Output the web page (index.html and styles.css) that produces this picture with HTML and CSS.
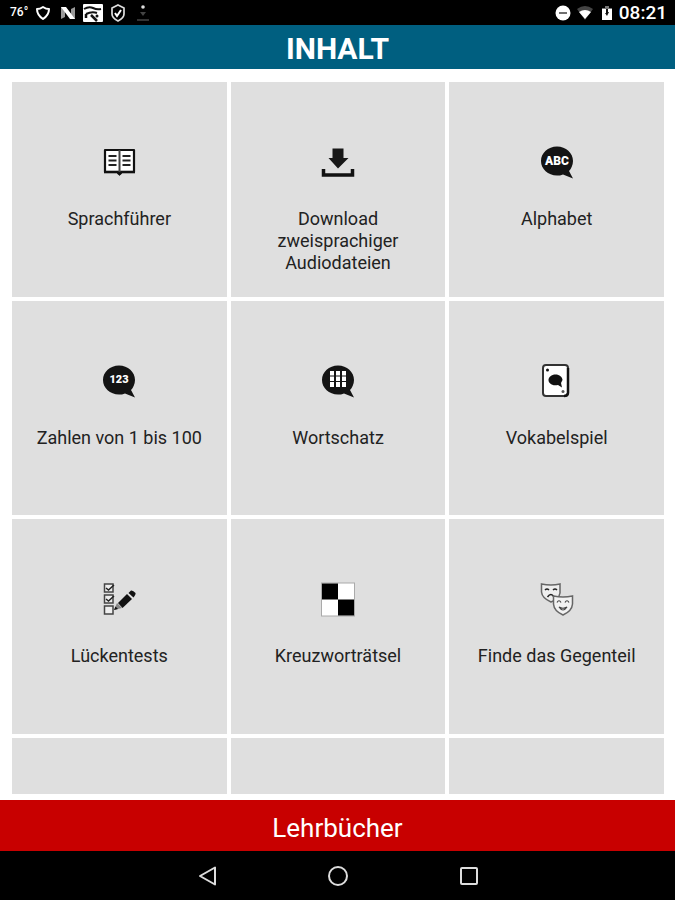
FILE: index.html
```html
<!DOCTYPE html>
<html lang="de">
<head>
<meta charset="utf-8">
<meta name="viewport" content="width=device-width, initial-scale=1">
<title>Inhalt</title>
<link rel="stylesheet" href="styles.css">
</head>
<body>
<div class="status">
  <div class="status-group">
    <span class="temp">76°</span>
    <svg class="status-icon" viewBox="0 0 20 20"><path d="M4 6Q7 6 10 4Q13 6 16 6Q16 12 10 16Q4 12 4 6Z" fill="none" stroke="#fff" stroke-width="2" stroke-linejoin="round"/></svg>
    <svg class="status-icon" viewBox="0 0 20 20"><path d="M3 4V16L7 14V8L13 16H17V4L13 6V11L7 4Z" fill="#999"/><path d="M3 4H8L17 16H12Z" fill="#fff"/></svg>
    <svg class="status-icon" viewBox="0 0 20 20"><rect x="0" y="1" width="20" height="18" rx="1" fill="#fff"/><path d="M1 6Q6 3 10 5T18 6M3 11Q9 8 14 10" fill="none" stroke="#111" stroke-width="2"/><path d="M3 11V15M8 12L14 18" fill="none" stroke="#111" stroke-width="2.500"/><circle cx="14" cy="13" r="1.500" fill="#111"/></svg>
    <svg class="status-icon" viewBox="0 0 20 20"><path d="M10 2L16 5V11Q16 15 10 18Q4 15 4 11V5Z" fill="none" stroke="#ddd" stroke-width="1.700"/><path d="M7 10L9 13L13 7" fill="none" stroke="#fff" stroke-width="2"/></svg>
    <svg class="status-icon" viewBox="0 0 20 20"><circle cx="10" cy="4" r="1.800" fill="#ddd"/><path d="M7 9H13L10 13Z" fill="#444"/><path d="M4 17H16" stroke="#333" stroke-width="2"/></svg>
  </div>
  <div class="status-group status-right">
    <svg class="status-icon" viewBox="0 0 20 20"><circle cx="10" cy="10" r="7.500" fill="#fff"/><path d="M6 10H14" stroke="#555" stroke-width="1.700"/></svg>
    <svg class="status-icon" viewBox="0 0 20 20"><path d="M2 6Q10 0 18 6L10 17Z" fill="#444"/><path d="M4 9Q10 5 16 9L10 16Z" fill="#fff"/></svg>
    <svg class="status-icon" viewBox="0 0 20 20"><path d="M5 5H8V3H12V5H15V8H5Z" fill="#777"/><path d="M5 6H15V17H5Z" fill="#fff"/><path d="M9 6V10H8L10 13L12 9H11V6Z" fill="#111"/></svg>
    <span class="clock">08:21</span>
  </div>
</div>
<header class="header"><h1>INHALT</h1></header>
<main class="content">
  <div class="grid">
    <button class="tile" type="button">
      <svg class="icon" viewBox="0 0 36 36"><path d="M4 6H33V28H20.500Q18.500 32 16.500 28H4Z" fill="#fff" stroke="#111" stroke-width="2.200" stroke-linejoin="round"/><path d="M3 28H34" stroke="#111" stroke-width="2.600"/><path d="M15.500 28H21.500L18.500 32Z" fill="#111"/><path d="M18.500 6V28" stroke="#444" stroke-width="2"/><path d="M7.500 12H15.500M7.500 16.500H15.500M7.500 21H15.500M21.500 12H29.500M21.500 16.500H29.500M21.500 21H29.500" stroke="#222" stroke-width="1.800"/></svg>
      <span class="label">Sprachführer</span>
    </button>
    <button class="tile" type="button">
      <svg class="icon" viewBox="0 0 36 36"><path d="M12.500 4.500H23.500V14H28.500L18 24.500L8.500 14H12.500Z" fill="#181818"/><path d="M3.500 25V31H32.500V25" fill="none" stroke="#111" stroke-width="3.500"/></svg>
      <span class="label">Download zweisprachiger Audiodateien</span>
    </button>
    <button class="tile" type="button">
      <svg class="icon" viewBox="0 0 36 36"><path d="M18 2.500C27 2.500 34 9 34 17C34 21 32 25 30 27L34 34.500L24 30.500C22 31.500 20 31.500 18 31.500C9 31.500 2 25 2 17S9 2.500 18 2.500Z" fill="#141414"/><text class="bubble-text" x="18" y="21">ABC</text></svg>
      <span class="label">Alphabet</span>
    </button>
    <button class="tile" type="button">
      <svg class="icon" viewBox="0 0 36 36"><path d="M18 2.500C27 2.500 34 9 34 17C34 21 32 25 30 27L34 34.500L24 30.500C22 31.500 20 31.500 18 31.500C9 31.500 2 25 2 17S9 2.500 18 2.500Z" fill="#141414"/><text class="bubble-text bubble-digits" x="18" y="20">123</text></svg>
      <span class="label">Zahlen von 1 bis 100</span>
    </button>
    <button class="tile" type="button">
      <svg class="icon" viewBox="0 0 36 36"><path d="M18 2.500C27 2.500 34 9 34 17C34 21 32 25 30 27L34 34.500L24 30.500C22 31.500 20 31.500 18 31.500C9 31.500 2 25 2 17S9 2.500 18 2.500Z" fill="#141414"/><path d="M10 8h4v4.500h-4zM16 8h4v4.500h-4zM22 8h4v4.500h-4zM10 13.500h4v4.500h-4zM16 13.500h4v4.500h-4zM22 13.500h4v4.500h-4zM10 19h4v5h-4zM16 19h4v5h-4zM22 19h4v5h-4z" fill="#fff"/></svg>
      <span class="label">Wortschatz</span>
    </button>
    <button class="tile" type="button">
      <svg class="icon" viewBox="0 0 36 36"><rect x="4" y="2" width="25" height="31" rx="3" fill="#fff" stroke="#333" stroke-width="2"/><path d="M29 5V30Q28.500 33 25 33" fill="none" stroke="#111" stroke-width="2.500"/><circle cx="8.500" cy="7" r="1.500" fill="#111"/><circle cx="24" cy="28.500" r="1.500" fill="#555"/><path d="M16.500 11.500C20.500 11.500 23.500 14 23.500 17L22 20L23 24.500L19 22C13 23.500 9.500 20 9.500 17S12.500 11.500 16.500 11.500Z" fill="#111"/></svg>
      <span class="label">Vokabelspiel</span>
    </button>
    <button class="tile" type="button">
      <svg class="icon" viewBox="0 0 36 36"><path d="M3.500 3H12V11H3.500ZM3.500 14H12V22H3.500ZM3.500 25H12V33H3.500Z" fill="#eee" stroke="#444" stroke-width="1.500"/><path d="M5 7L7.500 9L13 4M5 18L7.500 20L13 15" fill="none" stroke="#222" stroke-width="1.500"/><path d="M13 29L16 22L21 27Z" fill="#888"/><path d="M13 29L14.500 25.500L17 28Z" fill="#111"/><path d="M17 22L26 13L31 18L21.500 27Z" fill="#111"/><path d="M27.500 12L30 9.500Q32 9 34.500 12Q35 13 32.500 16.500Z" fill="#111"/></svg>
      <span class="label">Lückentests</span>
    </button>
    <button class="tile" type="button">
      <svg class="icon" viewBox="0 0 36 36"><rect x="1.500" y="2" width="33" height="33" fill="#fff" stroke="#aaa"/><path d="M2 2.500H18V18.500H34V34.500H18V18.500H2Z" fill="#000"/></svg>
      <span class="label">Kreuzworträtsel</span>
    </button>
    <button class="tile" type="button">
      <svg class="icon" viewBox="0 0 36 36"><path d="M2.500 3Q12 5 21 3V12Q20 18 12 21Q3 17 2.500 11Z" fill="#eee" stroke="#666" stroke-width="1.500"/><path d="M6 9Q8 7 10 9M14 9Q16 7 18 9M8.500 16Q12 11 15 16" fill="none" stroke="#222" stroke-width="1.500"/><path d="M14.500 15Q24 17 33.500 15V23Q33 30 24 34Q15 30 14.500 23Z" fill="#f2f2f2" stroke="#666" stroke-width="1.500"/><path d="M18 21.500Q20 18 22 21.500M26 21.500Q28 18 30 21.500M20 26Q24 28.500 28 26Q24 32 20 26Z" fill="none" stroke="#444" stroke-width="1.200"/></svg>
      <span class="label">Finde das Gegenteil</span>
    </button>
    <div class="tile"></div>
    <div class="tile"></div>
    <div class="tile"></div>
  </div>
</main>
<button class="books" type="button">Lehrbücher</button>
<nav class="nav">
  <button class="nav-button" type="button" aria-label="Zurück"><svg viewBox="0 0 24 24"><path d="M20 3.500V20.500L5 12Z" fill="none" stroke="#ddd" stroke-width="2" stroke-linejoin="round"/></svg></button>
  <button class="nav-button" type="button" aria-label="Startseite"><svg viewBox="0 0 24 24"><circle cx="12" cy="12" r="9" fill="none" stroke="#ddd" stroke-width="2"/></svg></button>
  <button class="nav-button" type="button" aria-label="Übersicht"><svg viewBox="0 0 24 24"><rect x="4" y="4" width="16" height="16" rx="1" fill="none" stroke="#ddd" stroke-width="2"/></svg></button>
</nav>
</body>
</html>
```
FILE: styles.css
```css
* {
  box-sizing: border-box;
}

body {
  margin: 0;
  height: 100vh;
  display: flex;
  flex-direction: column;
  background: #fff;
  font-family: Roboto, sans-serif;
}

button {
  border: 0;
  font: inherit;
}

.status {
  display: flex;
  justify-content: space-between;
  align-items: center;
  padding: 0 8px 0 10px;
  background: #000;
  color: #fff;
  line-height: 25px;
}

.status-group {
  display: flex;
  align-items: center;
  gap: 5px;
}

.status-right {
  gap: 2px;
}

.status-icon {
  width: 20px;
  height: 20px;
}

.temp {
  font-size: 12px;
  font-weight: 500;
}

.clock {
  padding-top: 1px;
  font-size: 19px;
  font-weight: 500;
  line-height: 24px;
}

.header {
  background: #005f80;
  color: #fff;
  text-align: center;
}

.header h1 {
  margin: 0;
  padding: 4px 0 0;
  font-size: 30px;
  font-weight: 700;
  line-height: 40px;
}

.content {
  flex: 1;
  min-height: 0;
  display: flex;
  padding: 13px 11px 6px 12px;
}

.grid {
  flex: 1;
  display: grid;
  grid-template-columns: repeat(3, 1fr);
  align-content: start;
  gap: 4px;
  overflow: hidden;
}

.tile {
  aspect-ratio: 1;
  display: flex;
  flex-direction: column;
  align-items: center;
  justify-content: flex-start;
  gap: 28px;
  padding: 62px 20px 0;
  background: #dfdfdf;
  color: #222;
}

.icon {
  flex: none;
  width: 36px;
  height: 36px;
}

.bubble-text {
  fill: #fff;
  font-size: 12px;
  font-weight: 900;
  text-anchor: middle;
}

.bubble-digits {
  font-size: 11px;
}

.label {
  font-size: 18px;
  line-height: 22px;
  text-align: center;
}

.books {
  padding: 8px 0 3px;
  background: #c80000;
  color: #fff;
  font-size: 26px;
  line-height: 40px;
}

.nav {
  display: flex;
  justify-content: center;
  gap: 107px;
  padding: 13px 0 12px;
  background: #000;
}

.nav-button {
  width: 24px;
  height: 24px;
  padding: 0;
  background: none;
}

.nav-button svg {
  display: block;
}
```
